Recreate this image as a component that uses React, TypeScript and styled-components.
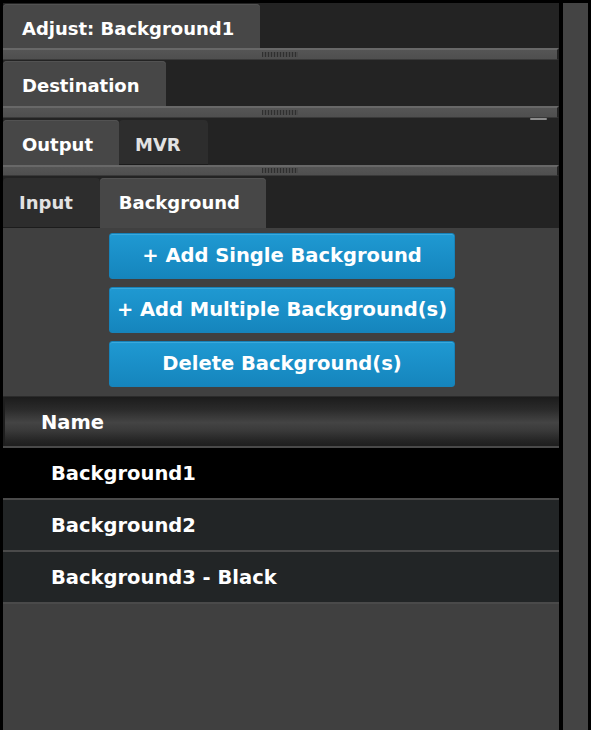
import React from "react";
import styled, { createGlobalStyle } from "styled-components";

const GlobalStyle = createGlobalStyle`
  html, body {
    margin: 0;
    padding: 0;
    background: #000;
  }
  * {
    box-sizing: border-box;
  }
`;

const Screen = styled.div`
  display: flex;
  gap: 4px;
  height: 730px;
  padding: 3px 3px 0 3px;
  background: #000;
  font-family: "DejaVu Sans", "Liberation Sans", sans-serif;
  font-weight: bold;
  color: #fff;
  overflow: hidden;
`;

const Panel = styled.div`
  flex: 0 0 556px;
  display: flex;
  flex-direction: column;
  background: #404040;
`;

const TabStrip = styled.div<{ $height: number }>`
  height: ${(p) => p.$height}px;
  display: flex;
  align-items: flex-end;
  background: #232323;
`;

const Tab = styled.div<{ $active?: boolean; $height: number }>`
  height: ${(p) => p.$height}px;
  padding: ${(p) => (p.$active ? "15px 26px 0 19px" : "15px 27px 0 16px")};
  font-size: 18px;
  line-height: 20px;
  white-space: nowrap;
  border-radius: 4px 4px 0 0;
  color: ${(p) => (p.$active ? "#ffffff" : "#e2e2e2")};
  background: ${(p) => (p.$active ? "#474747" : "#2d2d2d")};
  box-shadow: ${(p) =>
    p.$active ? "inset 0 1px 0 #525252" : "inset 0 -1px 0 #1c1c1c"};
`;

const Splitter = styled.div<{ $height: number }>`
  position: relative;
  height: ${(p) => p.$height}px;
  display: flex;
  justify-content: center;
  align-items: flex-end;
  padding-bottom: 2px;
  background: linear-gradient(#555555, #4f4f4f);
  border-top: 2px solid #686868;
  border-bottom: 1px solid #393939;
  border-right: 2px solid #232323;
`;

const Grip = styled.div`
  width: 36px;
  height: 5px;
  background: repeating-linear-gradient(
    90deg,
    #2f2f2f 0 1px,
    #4a4a4a 1px 3px
  );
`;

const Handle = styled.div`
  position: absolute;
  right: 10px;
  bottom: -3px;
  width: 17px;
  height: 2px;
  border-radius: 1px;
  background: #8c8c8c;
`;

const Content = styled.div`
  flex: 1;
  display: flex;
  flex-direction: column;
  background: #404040;
`;

const ButtonStack = styled.div`
  display: flex;
  flex-direction: column;
  align-items: flex-start;
  gap: 8px;
  padding: 5px 0 0 106px;
`;

const ActionButton = styled.button`
  width: 346px;
  height: 46px;
  border: 1px solid #1783ba;
  border-radius: 3px;
  background: linear-gradient(#1f99d2, #1585bd);
  box-shadow: inset 0 1px 0 #3aa9dc;
  color: #fff;
  font-family: "DejaVu Sans", "Liberation Sans", sans-serif;
  font-weight: bold;
  font-size: 19.5px;
  line-height: 22px;
  padding: 0;
  cursor: pointer;
`;

const Table = styled.div`
  margin-top: 9px;
  display: flex;
  flex-direction: column;
  border-bottom: 2px solid #4a4a4a;
`;

const HeaderRow = styled.div`
  height: 50px;
  display: flex;
  align-items: center;
  padding: 2px 0 0 38px;
  font-size: 19.5px;
  border-top: 1px solid #2b2b2b;
  background: linear-gradient(
    #1c1c1c 0%,
    #2a2a2a 25%,
    #444444 52%,
    #3a3a3a 68%,
    #262626 88%,
    #1e1e1e 100%
  );
  box-shadow: inset 2px 0 0 #1e1e1e;
`;

const Row = styled.div<{ $selected?: boolean }>`
  height: 52px;
  display: flex;
  align-items: center;
  padding-left: 48px;
  font-size: 19.5px;
  border-top: 2px solid #4a4a4a;
  background: ${(p) => (p.$selected ? "#000000" : "#222526")};
`;

const ScrollTrack = styled.div`
  flex: 0 0 25px;
  background: #444444;
`;

const rows = ["Background1", "Background2", "Background3 - Black"];

export default function App() {
  return (
    <>
      <GlobalStyle />
      <Screen>
        <Panel>
          <TabStrip $height={45}>
            <Tab $active $height={44}>
              Adjust: Background1
            </Tab>
          </TabStrip>
          <Splitter $height={12}>
            <Grip />
          </Splitter>
          <TabStrip $height={46}>
            <Tab $active $height={45}>
              Destination
            </Tab>
          </TabStrip>
          <Splitter $height={12}>
            <Grip />
            <Handle />
          </Splitter>
          <TabStrip $height={47}>
            <Tab $active $height={45}>
              Output
            </Tab>
            <Tab $height={45}>MVR</Tab>
          </TabStrip>
          <Splitter $height={11}>
            <Grip />
          </Splitter>
          <TabStrip $height={52}>
            <Tab $height={50}>Input</Tab>
            <Tab $active $height={50}>
              Background
            </Tab>
          </TabStrip>
          <Content>
            <ButtonStack>
              <ActionButton>+ Add Single Background</ActionButton>
              <ActionButton>+ Add Multiple Background(s)</ActionButton>
              <ActionButton>Delete Background(s)</ActionButton>
            </ButtonStack>
            <Table>
              <HeaderRow>Name</HeaderRow>
              {rows.map((name, i) => (
                <Row key={name} $selected={i === 0}>
                  {name}
                </Row>
              ))}
            </Table>
          </Content>
        </Panel>
        <ScrollTrack />
      </Screen>
    </>
  );
}
